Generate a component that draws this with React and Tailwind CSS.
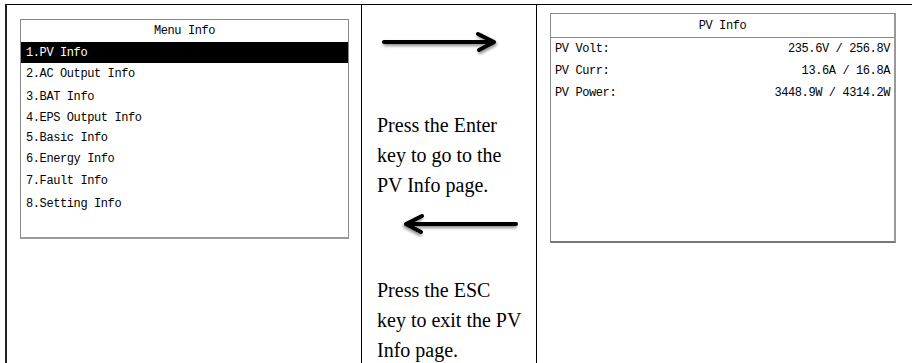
import React from "react";

const menuItems = [
  { label: "1.PV Info", h: "h-[21px]", active: true },
  { label: "2.AC Output Info", h: "h-[22px]" },
  { label: "3.BAT Info", h: "h-[23px]" },
  { label: "4.EPS Output Info", h: "h-[19px]" },
  { label: "5.Basic Info", h: "h-[21px]" },
  { label: "6.Energy Info", h: "h-[22px]" },
  { label: "7.Fault Info", h: "h-[22px]" },
  { label: "8.Setting Info", h: "h-[24px]" },
];

const pvRows = [
  ["PV Volt:", "235.6V / 256.8V"],
  ["PV Curr:", "13.6A / 16.8A"],
  ["PV Power:", "3448.9W / 4314.2W"],
];

const lcd = "font-['Liberation_Mono',monospace] text-[12px] tracking-[-0.4px] text-black";

function Arrow({ dir }) {
  // hand-drawn style arrow with a soft shadow, like the scanned doc
  const right = dir === "right";
  return (
    <svg width="124" height="28" viewBox="0 0 124 28" className="block">
      <defs>
        <filter id={`sh-${dir}`} x="-10%" y="-50%" width="120%" height="200%">
          <feGaussianBlur in="SourceAlpha" stdDeviation="1.6" />
          <feOffset dx="1" dy="2" result="b" />
          <feComponentTransfer>
            <feFuncA type="linear" slope="0.45" />
          </feComponentTransfer>
          <feMerge>
            <feMergeNode />
            <feMergeNode in="SourceGraphic" />
          </feMerge>
        </filter>
      </defs>
      <g
        filter={`url(#sh-${dir})`}
        stroke="#000"
        strokeWidth="4"
        strokeLinecap="round"
        strokeLinejoin="round"
        fill="none"
        transform={right ? "" : "translate(124 0) scale(-1 1)"}
      >
        <path d="M4 13 L112 13" />
        <path d="M98 5 L114 13 L99 21" />
      </g>
    </svg>
  );
}

export default function App() {
  return (
    <div className="w-[912px] h-[363px] overflow-hidden bg-white pt-[4px] pl-[5px]">
      <div className="flex w-[930px] h-[380px] border-t-[1.5px] border-l-2 border-[#222] border-t-black">
        {/* col 1 - menu screen */}
        <div className="w-[355px] shrink-0 border-r-[1.5px] border-black pt-[14px] pl-[13px]">
          <div className={`w-[329px] h-[220px] border border-[#8a8a8a] border-b-2 border-b-[#9a9a9a] ${lcd}`}>
            <div className="h-[22px] flex items-center justify-center">Menu Info</div>
            {menuItems.map((it) => (
              <div
                key={it.label}
                className={`${it.h} flex items-center pl-[5px] ${it.active ? "bg-black text-white" : ""}`}
              >
                {it.label}
              </div>
            ))}
          </div>
        </div>

        {/* col 2 - instructions */}
        <div className="w-[175px] shrink-0 border-r-[1.5px] border-black pl-[15px] font-['Liberation_Serif',serif] text-[20px] leading-[30px] text-black">
          <div className="mt-[24px] ml-[3px]">
            <Arrow dir="right" />
          </div>
          <p className="mt-[53px]">
            Press the Enter
            <br />
            key to go to the
            <br />
            PV Info page.
          </p>
          <div className="mt-[11px] ml-[19px]">
            <Arrow dir="left" />
          </div>
          <p className="mt-[36px]">
            Press the ESC
            <br />
            key to exit the PV
            <br />
            Info page.
          </p>
        </div>

        {/* col 3 - PV info screen */}
        <div className="flex-1 pt-[8px] pl-[13px]">
          <div className={`w-[346px] h-[230px] border border-[#8a8a8a] border-b-2 border-r-2 border-b-[#777] border-r-[#999] ${lcd}`}>
            <div className="h-[24px] flex items-center justify-center border-b border-[#8a8a8a]">PV Info</div>
            {pvRows.map(([k, v]) => (
              <div key={k} className="h-[22px] flex items-center justify-between pl-[4px] pr-[4px]">
                <span>{k}</span>
                <span>{v}</span>
              </div>
            ))}
          </div>
        </div>
      </div>
    </div>
  );
}
